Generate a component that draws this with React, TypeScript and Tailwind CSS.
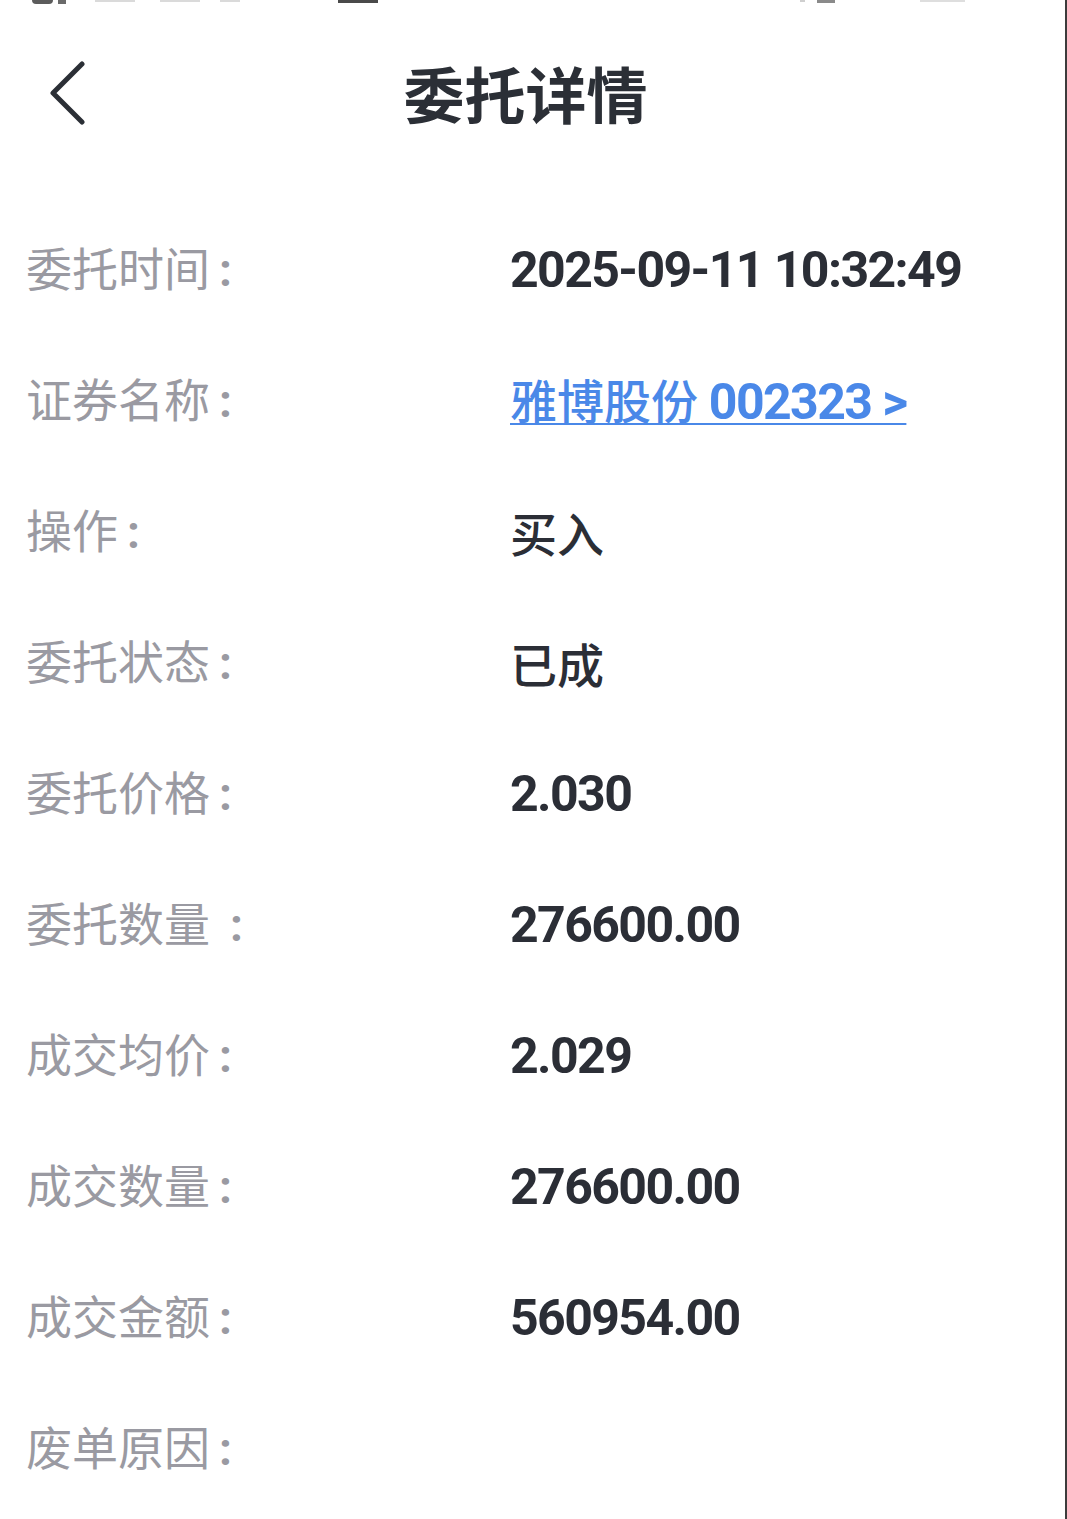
import React from "react";

const cjk = '"Noto Sans CJK SC", "Noto Sans", sans-serif';
const num = 'Roboto, "Noto Sans CJK SC", sans-serif';

type Row = { label: string; spaced?: boolean; value?: React.ReactNode };

function Cn({ children }: { children: React.ReactNode }) {
  return (
    <span className="text-[47px] font-medium" style={{ fontFamily: cjk }}>
      {children}
    </span>
  );
}

function Num({ children }: { children: React.ReactNode }) {
  return (
    <span className="text-[50px] font-bold tracking-[-1.6px]" style={{ fontFamily: num }}>
      {children}
    </span>
  );
}

const rows: Row[] = [
  { label: "委托时间", value: <Num>2025-09-11 10:32:49</Num> },
  {
    label: "证券名称",
    value: (
      <span className="text-[#4a88e8] underline decoration-2 underline-offset-[4px]">
        <Cn>雅博股份</Cn>
        <Num> 002323 &gt;</Num>
      </span>
    ),
  },
  { label: "操作", value: <Cn>买入</Cn> },
  { label: "委托状态", value: <Cn>已成</Cn> },
  { label: "委托价格", value: <Num>2.030</Num> },
  { label: "委托数量", spaced: true, value: <Num>276600.00</Num> },
  { label: "成交均价", value: <Num>2.029</Num> },
  { label: "成交数量", value: <Num>276600.00</Num> },
  { label: "成交金额", value: <Num>560954.00</Num> },
  { label: "废单原因" },
];

export default function App() {
  return (
    <div className="flex min-h-[1519px] w-full bg-white">
      <div className="flex-1 border-r-2 border-[#3c3c3c]">
        {/* clipped status bar remnants */}
        <div className="flex h-[4px] items-start">
          <div className="ml-[32px] h-[4px] w-[21px] rounded-b-sm bg-[#5c5c5c]" />
          <div className="ml-[5px] h-[4px] w-[8px] bg-[#6a6a6a]" />
          <div className="ml-[29px] h-[2px] w-[40px] bg-[#dadada]" />
          <div className="ml-[25px] h-[2px] w-[40px] bg-[#dadada]" />
          <div className="ml-[20px] h-[2px] w-[20px] bg-[#dadada]" />
          <div className="ml-[98px] h-[3px] w-[40px] bg-[#4a4a4a]" />
          <div className="ml-[422px] h-[2px] w-[5px] bg-[#cfcfcf]" />
          <div className="ml-[12px] h-[3px] w-[18px] bg-[#8a8a8a]" />
          <div className="ml-[85px] h-[2px] w-[45px] bg-[#dedede]" />
        </div>

        <header className="grid h-[184px] grid-cols-[1fr_auto_1fr] items-center">
          <div className="pl-[48px]">
            <svg width="40" height="64" viewBox="0 0 40 64" className="mb-[6px]" fill="none">
              <path d="M34 3 L5 32 L34 61" stroke="#2b2f36" strokeWidth="5" strokeLinecap="round" strokeLinejoin="round" />
            </svg>
          </div>
          <h1
            className="mb-[8px] mr-[14px] text-[61px] font-bold leading-none text-[#2b2f36]"
            style={{ fontFamily: cjk }}
          >
            委托详情
          </h1>
          <div />
        </header>

        <div className="pt-[16px]">
          {rows.map((row) => (
            <div key={row.label} className="grid h-[131px] grid-cols-[510px_1fr] items-center">
              <div
                className="flex items-baseline whitespace-pre pb-[3px] pl-[26px] text-[46px] leading-none text-[#9a9aa2]"
                style={{ fontFamily: cjk }}
              >
                <span>{row.label}</span>
                <span
                  className={row.spaced ? "ml-[20px] font-bold" : "ml-[9px] font-bold"}
                  style={{ fontFamily: num }}
                >
                  :
                </span>
              </div>
              <div className="leading-none text-[#2b2e36]">{row.value}</div>
            </div>
          ))}
        </div>
      </div>
    </div>
  );
}
